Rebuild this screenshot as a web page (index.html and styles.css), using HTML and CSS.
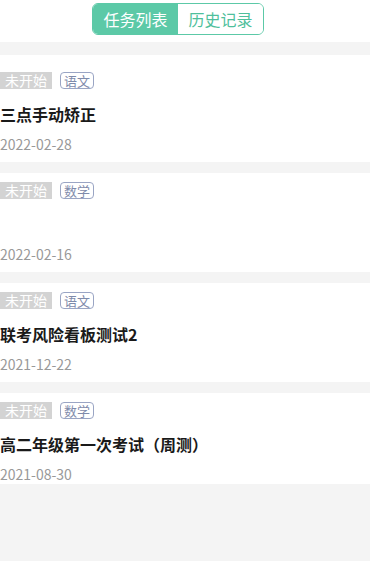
FILE: index.html
```html
<!DOCTYPE html>
<html lang="zh-CN">
<head>
<meta charset="utf-8">
<title>任务列表</title>
<link rel="stylesheet" href="styles.css">
</head>
<body>
<div class="page">
  <header class="header">
    <div class="toggle">
      <span class="seg seg-active">任务列表</span>
      <span class="seg">历史记录</span>
    </div>
  </header>
  <main class="list">
    <section class="card card-first">
      <div class="tags"><span class="status">未开始</span><span class="subject">语文</span></div>
      <div class="title">三点手动矫正</div>
      <div class="date">2022-02-28</div>
    </section>
    <section class="card">
      <div class="tags"><span class="status">未开始</span><span class="subject">数学</span></div>
      <div class="title"></div>
      <div class="date">2022-02-16</div>
    </section>
    <section class="card">
      <div class="tags"><span class="status">未开始</span><span class="subject">语文</span></div>
      <div class="title">联考风险看板测试2</div>
      <div class="date">2021-12-22</div>
    </section>
    <section class="card card-last">
      <div class="tags"><span class="status">未开始</span><span class="subject">数学</span></div>
      <div class="title">高二年级第一次考试（周测）</div>
      <div class="date">2021-08-30</div>
    </section>
  </main>
</div>
</body>
</html>
```

FILE: styles.css
```css
* { box-sizing: border-box; margin: 0; padding: 0; }
html, body { height: 100%; }
body {
  background: #f4f4f4;
  font-family: "Noto Sans CJK SC", "Noto Sans", sans-serif;
  color: #222;
}
.page { display: flex; flex-direction: column; }
.header {
  background: #fff;
  height: 42px;
  display: flex;
  justify-content: center;
  padding-top: 3px;
  padding-right: 14px;
}
.toggle {
  display: flex;
  height: 32px;
  border: 1px solid #5cc9a7;
  border-radius: 6px;
  overflow: hidden;
}
.seg {
  width: 85px;
  display: flex;
  align-items: center;
  justify-content: center;
  font-size: 16px;
  color: #4fbf9c;
  background: #fff;
}
.seg-active {
  width: 85px;
  background: #5cc9a7;
  color: #fff;
}
.list {
  margin-top: 13px;
  display: flex;
  flex-direction: column;
  gap: 11px;
}
.card {
  background: #fff;
  padding: 9px 0 8px 0;
  display: flex;
  flex-direction: column;
}
.card-first { padding-top: 17px; }
.card-last { padding-bottom: 0; }
.tags {
  display: flex;
  align-items: center;
  gap: 8px;
  height: 17px;
}
.status {
  background: #d3d3d3;
  color: #fff;
  font-size: 14px;
  line-height: 17px;
  height: 17px;
  padding: 0 5px;
}
.subject {
  border: 1px solid #9aa5c4;
  color: #7f8bab;
  border-radius: 4px;
  font-size: 13px;
  line-height: 15px;
  height: 17px;
  padding: 0 3px;
}
.title {
  margin-top: 13px;
  min-height: 24px;
  font-size: 16px;
  line-height: 24px;
  font-weight: 700;
  color: #1a1a1a;
}
.date {
  margin-top: 8px;
  font-size: 14px;
  line-height: 20px;
  color: #999;
}
```
